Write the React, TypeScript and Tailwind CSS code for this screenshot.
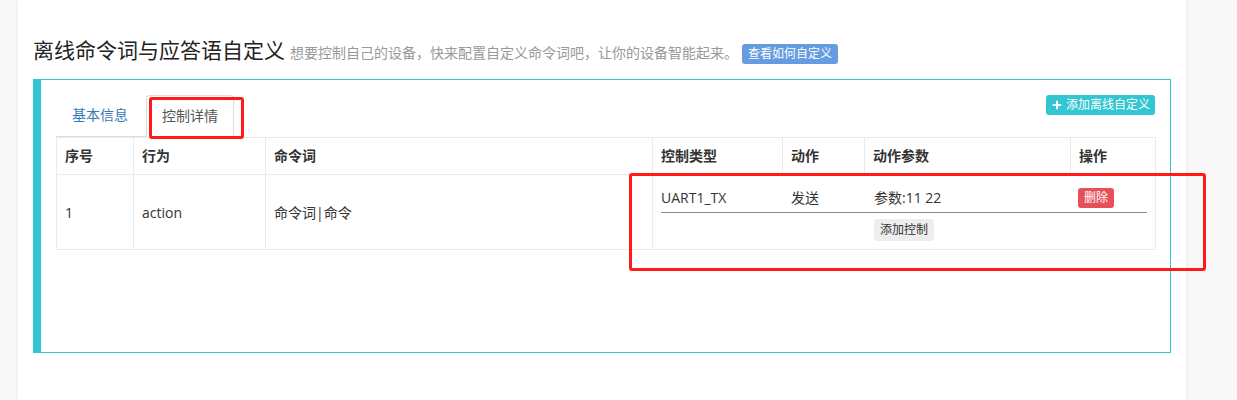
import { Plus } from "lucide-react";

const font = { fontFamily: '"Open Sans", "Noto Sans CJK SC", sans-serif' };

const headers = [
	{ label: "序号", w: "w-[77px]" },
	{ label: "行为", w: "w-[132px]" },
	{ label: "命令词", w: "w-[387px]" },
	{ label: "控制类型", w: "w-[130px]" },
	{ label: "动作", w: "w-[82px]" },
	{ label: "动作参数", w: "w-[206px]" },
	{ label: "操作", w: "w-[85px]" },
];

function Tabs() {
	return (
		<div className="flex items-end border-b border-[#ddd] h-[42px]">
			<div className="mr-[2px] px-[15px] py-[10px] text-[14px] leading-[20px] text-[#337ab7] border border-transparent">
				基本信息
			</div>
			<div className="-mb-px px-[15px] py-[10px] text-[14px] leading-[20px] text-[#555] bg-white border border-[#ddd] border-b-white rounded-t-[4px]">
				控制详情
			</div>
		</div>
	);
}

function ControlCell() {
	return (
		<td colSpan={4} className="border border-[#e7ecf1] px-[8px] py-[8px] align-top">
			<div className="flex items-center border-b border-[#888] pt-[4px] pb-[4px] text-[14px] leading-[20px] text-[#333]">
				<div className="w-[130px]">UART1_TX</div>
				<div className="w-[83px]">发送</div>
				<div className="w-[204px]">参数:11 22</div>
				<div>
					<span className="inline-block bg-[#e7505a] text-white text-[12px] leading-[20px] px-[6px] rounded-[3px]">
						删除
					</span>
				</div>
			</div>
			<div className="flex justify-center mt-[6px]">
				<span className="inline-block bg-[#eeeeee] text-[#333] text-[12px] leading-[22px] px-[6px] rounded-[3px]">
					添加控制
				</span>
			</div>
		</td>
	);
}

export default function App() {
	return (
		<div className="relative min-h-[400px] bg-[#f8f8f8] overflow-hidden" style={font}>
			<div className="ml-[18px] w-[1168px] h-[400px] bg-white shadow-[0_0_3px_rgba(0,0,0,0.1)] px-[15px] pt-[35px]">
				<div className="flex items-baseline">
					<h1 className="text-[21px] leading-[30px] text-[#222] font-normal">
						离线命令词与应答语自定义
					</h1>
					<span className="ml-[5px] text-[14px] text-[#999]">
						想要控制自己的设备，快来配置自定义命令词吧，让你的设备智能起来。
					</span>
					<span className="ml-[4px] inline-block bg-[#659be0] text-white text-[12px] leading-[20px] px-[6px] rounded-[3px]">
						查看如何自定义
					</span>
				</div>

				<div className="mt-[14px] h-[274px] border-l-[8px] border-y border-r border-[#32c5d2] pl-[15px] pr-[15px] pt-[15px]">
					<div className="flex justify-between items-start">
						<Tabs />
						<span className="flex items-center gap-[3px] bg-[#32c5d2] text-white text-[12px] leading-[20px] px-[5px] rounded-[3px]">
							<Plus size={12} strokeWidth={4} />
							添加离线自定义
						</span>
					</div>

					<table className="w-[1099px] table-fixed border-collapse text-[14px] text-[#333]">
						<thead>
							<tr>
								{headers.map((h) => (
									<th
										key={h.label}
										className={`${h.w} border border-[#e7ecf1] px-[8px] py-[8px] leading-[20px] text-left font-bold`}
									>
										{h.label}
									</th>
								))}
							</tr>
						</thead>
						<tbody>
							<tr>
								<td className="border border-[#e7ecf1] px-[8px] align-middle">1</td>
								<td className="border border-[#e7ecf1] px-[8px] align-middle">action</td>
								<td className="border border-[#e7ecf1] px-[8px] align-middle">命令词|命令</td>
								<ControlCell />
							</tr>
						</tbody>
					</table>
				</div>
			</div>

			<div className="absolute left-[149px] top-[97px] w-[95px] h-[42px] border-[3px] border-[#ff1a1a] rounded-[3px]" />
			<div className="absolute left-[629px] top-[173px] w-[577px] h-[98px] border-[3px] border-[#ff1a1a] rounded-[3px]" />
		</div>
	);
}
